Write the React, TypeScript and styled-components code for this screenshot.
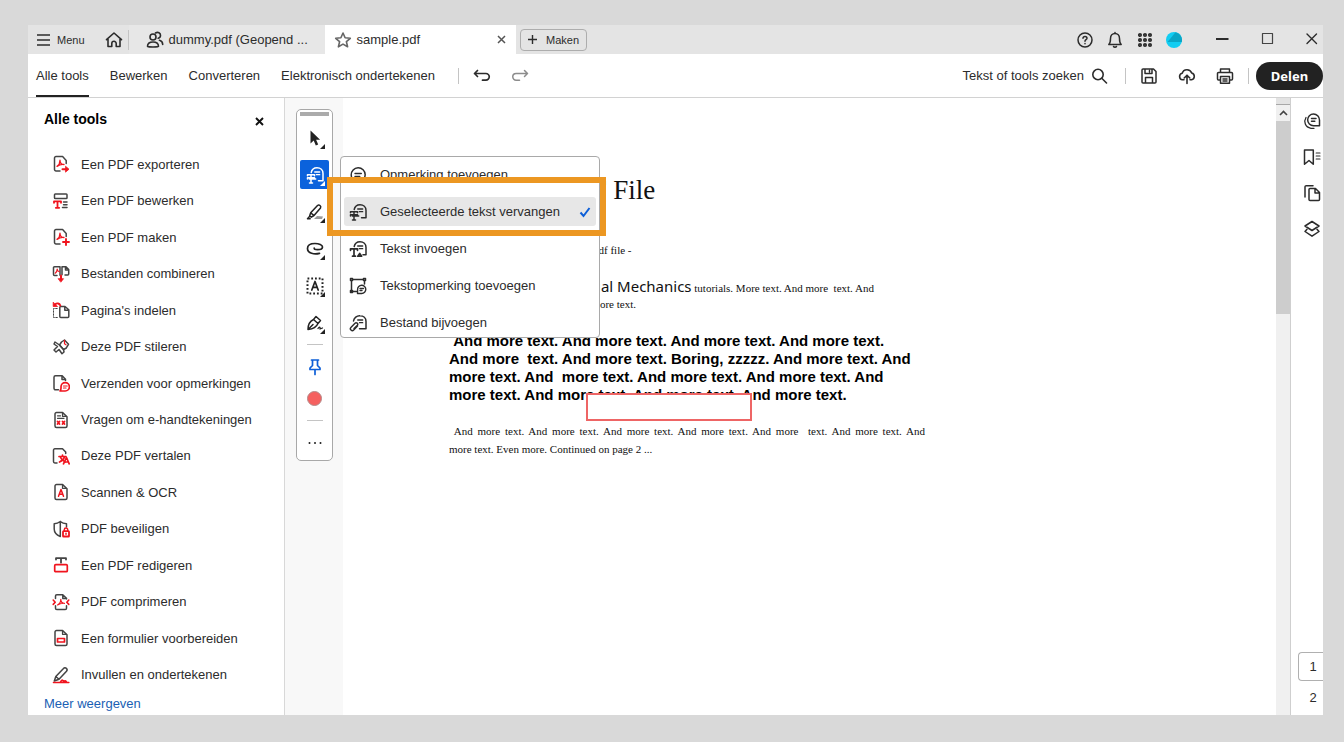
import React from "react";
import styled, { createGlobalStyle } from "styled-components";

const INK = "#2c2c2c";
const RED = "#f0141e";
const BLUE = "#0d5fd8";

const Global = createGlobalStyle`
  * { box-sizing: border-box; }
  body { margin: 0; background: #d9d9d9; font-family: "Liberation Sans", Arial, sans-serif; font-size: 13px; color: ${INK}; }
  button { font: inherit; color: inherit; background: none; border: 0; padding: 0; cursor: pointer; }
  svg { display: block; flex: none; }
`;

const Page = styled.div`
  min-height: 100vh;
  padding: 25px 21px 27px 28px;
  display: flex;
  flex-direction: column;
`;

const Window = styled.div`
  flex: 1;
  background: #fff;
  display: flex;
  flex-direction: column;
`;

/* Title bar */
const TitleBar = styled.header`
  height: 29px;
  background: #e4e4e4;
  display: flex;
  align-items: center;
`;
const MenuButton = styled.button`
  display: flex;
  align-items: center;
  gap: 6px;
  padding: 0 8px;
  font-size: 11px;
`;
const HomeButton = styled.button`
  padding: 0 5px 0 12px;
`;
const Divider = styled.span<{ $h?: number }>`
  width: 1px;
  height: ${(p) => p.$h ?? 16}px;
  background: #c4c4c4;
`;
const Tab = styled.div<{ $active?: boolean }>`
  align-self: stretch;
  width: ${(p) => (p.$active ? 191 : 196)}px;
  padding: 0 ${(p) => (p.$active ? 9 : 17)}px;
  display: flex;
  align-items: center;
  background: ${(p) => (p.$active ? "#fff" : "#e7e7e7")};
`;
const TabLabel = styled.button`
  display: flex;
  align-items: center;
  gap: 5px;
  flex: 1;
  white-space: nowrap;
`;
const NewButton = styled.button`
  margin-left: 4px;
  height: 22px;
  width: 67px;
  display: flex;
  align-items: center;
  justify-content: center;
  gap: 8px;
  font-size: 11px;
  border: 1px solid #adadad;
  border-radius: 4px;
`;
const TitleActions = styled.div`
  margin-left: auto;
  display: flex;
  align-items: center;
  gap: 12px;
`;
const WindowControls = styled.div`
  margin-left: 31px;
  padding-right: 2px;
  display: flex;
  align-items: center;
  gap: 27px;
`;

/* Main toolbar */
const ToolBar = styled.div`
  height: 44px;
  padding-left: 8px;
  border-bottom: 1px solid #d2d2d2;
  display: flex;
  align-items: center;
`;
const Nav = styled.nav`
  align-self: stretch;
  display: flex;
  gap: 21px;
  margin-right: 23px;
`;
const NavLink = styled.a<{ $active?: boolean }>`
  display: flex;
  align-items: center;
  color: ${INK};
  text-decoration: none;
  white-space: nowrap;
  border-top: 2px solid transparent;
  border-bottom: 2px solid ${(p) => (p.$active ? "#222" : "transparent")};
`;
const History = styled.div`
  display: flex;
  gap: 20px;
  padding-left: 14px;
`;
const ToolBarRight = styled.div`
  margin-left: auto;
  display: flex;
  align-items: center;
`;
const SearchButton = styled.button`
  display: flex;
  align-items: center;
  gap: 6px;
  margin-right: 17px;
`;
const FileActions = styled.div`
  display: flex;
  gap: 20px;
  padding: 0 14px;
`;
const ShareButton = styled.button`
  width: 67px;
  height: 28px;
  margin-left: 7px;
  border-radius: 14px;
  background: #222;
  color: #fff;
  font-family: "Noto Sans", "Liberation Sans", sans-serif;
  font-weight: 700;
  font-size: 13px;
`;

/* Body */
const Body = styled.div`
  flex: 1;
  display: flex;
`;
const Sidebar = styled.aside`
  flex: 0 0 257px;
  border-right: 1px solid #d8d8d8;
  display: flex;
  flex-direction: column;
`;
const SidebarHead = styled.div`
  height: 48px;
  padding: 12px 19px 0 16px;
  display: flex;
  justify-content: space-between;
  align-items: flex-start;
`;
const SidebarTitle = styled.h1`
  margin: 0;
  font-size: 14px;
  line-height: 18px;
  color: #000;
`;
const CloseButton = styled.button`
  padding: 6px 0;
`;
const ToolList = styled.ul`
  flex: 1;
  margin: 0;
  padding: 0;
  list-style: none;
  display: flex;
  flex-direction: column;
`;
const ToolItem = styled.li`
  flex: 1;
  display: flex;
`;
const ToolButton = styled.button`
  flex: 1;
  min-height: 24px;
  padding-left: 24px;
  display: flex;
  align-items: center;
  gap: 11px;
  text-align: left;
`;
const MoreLink = styled.a`
  padding-left: 16px;
  line-height: 22px;
  color: #1a5fb4;
  text-decoration: none;
`;

/* Quick tools */
const Canvas = styled.main`
  flex: 1;
  display: flex;
`;
const Gutter = styled.div`
  flex: 0 0 58px;
  padding: 11px 0 0 11px;
  background: #f8f8f8;
`;
const Quick = styled.div`
  width: 37px;
  padding: 2px 3px 3px;
  border: 1px solid #a8a8a8;
  border-radius: 5px;
  background: #fff;
  display: flex;
  flex-direction: column;
  align-items: center;
  gap: 7px;
`;
const Handle = styled.div`
  align-self: stretch;
  height: 4px;
  background: #ababab;
`;
const QuickGroup = styled.div<{ $gap: number }>`
  display: flex;
  flex-direction: column;
  gap: ${(p) => p.$gap}px;
`;
const QuickRule = styled.div`
  width: 16px;
  height: 1px;
  background: #c4c4c4;
`;
const QuickSlot = styled.div`
  position: relative;
`;
const QuickButton = styled.button<{ $on?: boolean }>`
  width: 29px;
  height: 29px;
  display: grid;
  place-items: center;
  border-radius: 2px;
  color: ${(p) => (p.$on ? "#fff" : "#222")};
  background: ${(p) => (p.$on ? "#0b62dc" : "none")};
`;
const Corner = styled.span<{ $on?: boolean }>`
  position: absolute;
  right: 4px;
  bottom: 3px;
  border-left: 5px solid transparent;
  border-bottom: 5px solid ${(p) => (p.$on ? "#fff" : "#222")};
`;
const ColorDot = styled.span`
  width: 15px;
  height: 15px;
  border-radius: 50%;
  border: 1px solid #b58a8a;
  background: #f5605f;
`;
const Menu = styled.div`
  position: absolute;
  z-index: 2;
  left: 40px;
  top: -4px;
  width: 260px;
  padding: 3px 3px 0;
  border: 1px solid #a9a9a9;
  border-radius: 4px;
  background: #fff;
  display: flex;
  flex-direction: column;
  gap: 8px;
`;
const MenuItem = styled.button<{ $on?: boolean }>`
  height: 29px;
  padding: 0 5px;
  display: flex;
  align-items: center;
  gap: 13px;
  border-radius: 3px;
  background: ${(p) => (p.$on ? "#e7e7e7" : "none")};
`;
const MenuText = styled.span`
  flex: 1;
  text-align: left;
`;
const Marker = styled.div`
  position: absolute;
  z-index: 3;
  left: 27px;
  top: 17px;
  width: 279px;
  height: 59px;
  border: 6px solid #ec9722;
  pointer-events: none;
`;

/* Document */
const Doc = styled.article`
  flex: 1;
  padding: 76px 20px 0 106px;
  color: #111;
  font-family: "Liberation Serif", "Times New Roman", serif;
  font-size: 11px;
  line-height: 16px;
`;
const DocTitle = styled.h2`
  margin: 0 0 36px;
  font-weight: 400;
  font-size: 27px;
  line-height: 32px;
`;
const Para = styled.p<{ $indent?: number; $gap?: number; $line?: number }>`
  margin: 0 0 ${(p) => p.$gap ?? 0}px;
  max-width: 476px;
  text-indent: ${(p) => p.$indent ?? 0}px;
  line-height: ${(p) => p.$line ?? 16}px;
  white-space: nowrap;
`;
const Large = styled.span`
  font-family: "Noto Sans", sans-serif;
  font-size: 15px;
  line-height: 1;
`;
const Justified = styled.span`
  display: block;
  white-space: normal;
  text-align-last: justify;
`;
const BoldPara = styled.div`
  position: relative;
  margin-bottom: 18px;
  font-family: "Liberation Sans", Arial, sans-serif;
  font-weight: 700;
  font-size: 15px;
  line-height: 18px;
  color: #000;
  white-space: nowrap;
`;
const Redaction = styled.div`
  position: absolute;
  left: 137px;
  top: 61px;
  width: 166px;
  height: 28px;
  border: 2px solid #ee6565;
  background: #fff;
`;

/* Scroll bar and right rail */
const ScrollBar = styled.div`
  flex: 0 0 15px;
  background: #f0f0f0;
  border-right: 1px solid #cfcfcf;
  display: flex;
  flex-direction: column;
`;
const Splitter = styled.div`
  height: 7px;
  background: #e3e3e3;
  border-bottom: 1px solid #a8a8a8;
`;
const ScrollUp = styled.button`
  height: 16px;
  display: grid;
  place-items: center;
`;
const Thumb = styled.div`
  height: 193px;
  background: #cdcdcd;
`;
const Rail = styled.div`
  flex: 0 0 32px;
  display: flex;
  flex-direction: column;
  justify-content: space-between;
`;
const RailTools = styled.div`
  padding: 14px 0 0 12px;
  display: flex;
  flex-direction: column;
  gap: 18px;
`;
const Pages = styled.div`
  padding: 0 0 9px 7px;
  display: flex;
  flex-direction: column;
  gap: 7px;
`;
const PageButton = styled.button<{ $on?: boolean }>`
  height: ${(p) => (p.$on ? 29 : 18)}px;
  padding-left: 4px;
  border: solid ${(p) => (p.$on ? "#b0b0b0" : "transparent")};
  border-width: 1px 0 1px 1px;
  border-radius: 4px 0 0 4px;
`;

/* Icons */
type IconProps = { children: React.ReactNode; size?: number; w?: number; color?: string };
const Icon = ({ children, size = 18, w = 1.5, color = "currentColor" }: IconProps) => (
  <svg width={size} height={size} viewBox="0 0 18 18" fill="none" stroke={color} strokeWidth={w} strokeLinecap="round" strokeLinejoin="round" aria-hidden="true">
    {children}
  </svg>
);
const Acro = () => (
  <path stroke={RED} strokeWidth="1.300" d="M5 11.400c1.800-1.200 3-3.600 3-6.200 0 2.600 1.200 4.200 4 4.300-2.600-.3-4.800.3-7 1.900z" />
);
const Fold = () => <path d="M10.500 1.700v3.600h3.800" strokeWidth="1.200" />;
const fullDoc = "M10.600 1.600H4.500A1.500 1.500 0 0 0 3 3.100v11.800a1.500 1.500 0 0 0 1.500 1.500h9a1.500 1.500 0 0 0 1.500-1.500V5.800z";
const openDoc = "M14.200 8.500V5.400L10.600 1.600H4A1.500 1.500 0 0 0 2.500 3.100v11.300A1.500 1.500 0 0 0 4 15.900h4";

const tools: { label: string; icon: React.ReactNode }[] = [
  { label: "Een PDF exporteren", icon: <><path d={openDoc} /><Acro /><path d="M10.500 14.200h4" stroke={RED} strokeWidth="2" /><path d="M13.800 11.500l3.200 2.700-3.200 2.700z" fill={RED} stroke={RED} strokeWidth=".8" /></> },
  { label: "Een PDF bewerken", icon: <><rect x="2.500" y="2" width="12.500" height="4.500" rx=".8" /><path d="M11.500 10H15M11.500 12.700H15M10.500 15.500H15" /><path d="M2 10.800V9.300h7v1.500M5.500 9.300v6.300M3.800 15.800h3.400" stroke={RED} strokeWidth="1.800" /></> },
  { label: "Een PDF maken", icon: <><path d={openDoc} /><Acro /><path d="M14 11v6M11 14h6" stroke={RED} strokeWidth="1.900" /></> },
  { label: "Bestanden combineren", icon: <><path d="M5 10.500H2.500A1 1 0 0 1 1.500 9.500V2.800a1 1 0 0 1 1-1H8v8.500M10 9.800V1.800h4l2.700 2.700v4.500a1 1 0 0 1-1 1H13M13.500 2v3h3" /><path d="M3.200 8.200C4.500 7.300 5.200 5.500 5.200 4c0 1.600.8 2.500 2 2.700" stroke={RED} strokeWidth="1.200" /><path d="M9 10.500v4" stroke={RED} strokeWidth="2" /><path d="M6.500 13.700h5L9 16.900z" fill={RED} stroke={RED} strokeWidth=".8" /></> },
  { label: "Pagina's indelen", icon: <><path d="M13 5.500H8.800a1 1 0 0 0-1 1v9a1 1 0 0 0 1 1h7a1 1 0 0 0 1-1V8.800zM12.800 5.700v3.500h3.800" /><path d="M5.200 7.500H1.500v9h4.200" strokeWidth="1" strokeDasharray="1.500 1.500" /><path d="M3 3.500c2-1.800 4.500-1.300 5.300 1" stroke={RED} strokeWidth="1.900" /><path d="M1.200 1.500v4h4z" fill={RED} stroke={RED} strokeWidth=".8" /></> },
  { label: "Deze PDF stileren", icon: <><path d="M9.500 4l3-2 4 4.300-2.500 4-2.500 1.200-4-4.500z" /><path d="M7.500 7L3 4l-1 2 3.500 2.500L2 12l2 2 3-2.500 3 4.200L12 14l-.5-2.500M7.500 7l4 4.500" /><path d="M12.500 2.300v3.500l1.500 1" stroke={RED} strokeWidth="1.200" /></> },
  { label: "Verzenden voor opmerkingen", icon: <><path d="M13.500 6.500V5.300L10.200 1.800H3.500A1.500 1.500 0 0 0 2 3.300v11a1.500 1.500 0 0 0 1.500 1.500h3M10 2v3.500h3.500" /><path d="M8 17h5.200a4.200 4.200 0 1 0-4.200-4.200c0 1.800.3 2.800-1 4.200z" stroke={RED} strokeWidth="1.700" /><path d="M11.500 12h3.700M11.500 14h2.500" stroke={RED} strokeWidth="1.200" /></> },
  { label: "Vragen om e-handtekeningen", icon: <><path d={fullDoc} /><Fold /><path d="M5.500 4.800h3M5.500 7.300h6.500" strokeWidth="1.200" /><path d="M5.500 10.500l2 2.500M7.500 10.500l-2 2.500M10.500 10.500l2 2.500M12.500 10.500l-2 2.500" stroke={RED} strokeWidth="1.800" /></> },
  { label: "Deze PDF vertalen", icon: <><path d="M13.700 6.500V5L10.500 1.800H2.800a1.300 1.300 0 0 0-1.300 1.300v11.500a1.300 1.300 0 0 0 1.300 1.300H5" /><path d="M7 9.500h7M10.500 8v1.500M8.300 10c1 2.500 2.700 4 4.700 5M12.500 10c-.8 2.500-2.500 4-5 5M11.500 16.800l3-6.300 2.700 6.300M12.500 15h3.700" stroke={RED} strokeWidth="1.700" /></> },
  { label: "Scannen & OCR", icon: <><path d={fullDoc} /><Fold /><path d="M6.500 13.300L9 6.500l2.500 6.800M7.300 11.300h3.400" stroke={RED} strokeWidth="1.500" /></> },
  { label: "PDF beveiligen", icon: <><path d="M14.500 7V3.800C12.500 3.700 10 2.900 8.300 1.500 6.500 2.900 4.500 3.700 2.200 3.800V9c0 3.500 2.500 6 6.100 7.500V1.500" /><rect x="11" y="11.200" width="6" height="5.300" rx=".6" stroke={RED} strokeWidth="1.800" /><path d="M12.300 11V9.700a1.700 1.700 0 0 1 3.400 0V11M14 13.200v1" stroke={RED} /></> },
  { label: "Een PDF redigeren", icon: <><path d="M4 3.500V2.200h10v1.300M9 2.200v4.500" strokeWidth="1.800" /><rect x="2.700" y="8.700" width="12.600" height="7" rx="1" stroke={RED} strokeWidth="1.700" /></> },
  { label: "PDF comprimeren", icon: <><path d="M3.500 5.500V3A1.300 1.300 0 0 1 4.800 1.700h6l3.700 3.500v.8M10.800 2v3.500h3.500M3.500 12.800v2.400a1.300 1.300 0 0 0 1.300 1.300h8.400a1.300 1.300 0 0 0 1.300-1.300v-2.400" /><path d="M1.200 7l2 2.200-2 2.200M16.800 7l-2 2.200 2 2.200" stroke={RED} strokeWidth="1.600" /><path d="M5.500 12C7.500 11 8.800 8.700 8.800 6.300c0 2.500 1.200 4 3.700 4-2.500-.2-4.800.2-7 1.700z" stroke={RED} strokeWidth="1.200" /></> },
  { label: "Een formulier voorbereiden", icon: <><path d={fullDoc} /><Fold /><rect x="5.500" y="9.500" width="7" height="3.500" stroke={RED} strokeWidth="1.700" /></> },
  { label: "Invullen en ondertekenen", icon: <><path d="M2.300 15l1.500-4.500L11.500 2.500a1.900 1.900 0 0 1 3 2.700L7 13.200zM3.800 10.500L7 13.200" /><path d="M1.500 16.500h15.300M8.500 16c1.500-2.500 2.500-2.500 3 0 1.200-1.500 2-1.500 3 0" stroke={RED} strokeWidth="1.600" /></> },
];

const CommentReplace = () => (
  <Icon><path d="M5.200 6.500A6 6 0 0 1 11 1.700c3.500 0 6 2.400 6 5.700v7.300h-4.500" /><path d="M8.700 6h5M10.300 8.700h3.400" strokeWidth="1.300" /><path d="M1.500 9.800V8.700h7v1.100M5 8.700v3M3.300 13h6.400M1.500 13v-1.300h7V13M5 13v4M3.500 17h3" strokeWidth="1.500" /></Icon>
);
const CommentAdd = () => (
  <Icon><path d="M3 15.800h6.200A7 7 0 1 0 2.200 9c0 2.500 1.300 4 1.300 4z" /><path d="M6 7.500h6.300M6 10.500h4.800" strokeWidth="1.400" /></Icon>
);
const CommentInsert = () => (
  <Icon><path d="M5.200 6.500A6 6 0 0 1 11 1.700c3.500 0 6 2.400 6 5.700v7.300h-3" /><path d="M8.700 6h5M10.300 8.700h3.400" strokeWidth="1.300" /><path d="M1.500 10.300V8.800h7v1.500M5 8.800v7M3.500 16.200h3M8.800 16.200l1.900-2.700 1.900 2.700z" strokeWidth="1.700" /></Icon>
);
const CommentText = () => (
  <Icon><path d="M2.500 4v10.500h5M4 2.500h10M15.500 4v3M1.500 1.500h2v2h-2zM14.500 1.500h2v2h-2zM1.500 13.500h2v2h-2z" /><path d="M8.500 16.500h4.200A4.100 4.100 0 1 0 8.600 12.500zM11 11.500h3.500M11 13.500h2" strokeWidth="1.400" /></Icon>
);
const CommentAttach = () => (
  <Icon><path d="M4.500 7A6.200 6.200 0 0 1 11 1.700c3.500 0 6 2.400 6 5.700v7.300H10.500" /><path d="M8.700 6h5M10.500 8.700h3.200" strokeWidth="1.300" /><path d="M8.500 12l-3.800 4a1.900 1.900 0 0 1-2.800-2.600L6 9.200a1.600 1.600 0 0 1 2.400 2.100L5 14.500" strokeWidth="1.400" /></Icon>
);

const menuItems = [
  { label: "Opmerking toevoegen", icon: <CommentAdd /> },
  { label: "Geselecteerde tekst vervangen", icon: <CommentReplace />, on: true },
  { label: "Tekst invoegen", icon: <CommentInsert /> },
  { label: "Tekstopmerking toevoegen", icon: <CommentText /> },
  { label: "Bestand bijvoegen", icon: <CommentAttach /> },
];

const quickTools: { label: string; icon: React.ReactNode; menu?: boolean }[] = [
  { label: "Selecteren", icon: <Icon><path d="M4.500 1.500v13l3.200-3 2.100 5 2.400-1-2.100-4.800h4z" fill="currentColor" stroke="none" /></Icon> },
  { label: "Opmerking", icon: <CommentReplace />, menu: true },
  { label: "Markeren", icon: <Icon><path d="M8 16h8l1-2.500-6-.5z" fill="#999" stroke="none" /><path d="M4.700 9.800L11.500 2.500a2 2 0 0 1 3 2.500l-6.500 7.500zM4.700 9.800l-1 3 1.600 1.400L8 12.500M3.500 13.500l-2 2.200h2.700" /></Icon> },
  { label: "Tekenen", icon: <Icon w={1.7}><path d="M13.500 13.300c-5 1.200-12 .2-12-4.800C1.500 5 5 3.500 9 3.500s7.500 1.500 7.500 3.400-3 2.700-5 2.700-3.300-.4-3.300-1.400" /></Icon> },
  { label: "Tekstvak", icon: <Icon><path d="M1.500 1.500h15v15h-15z" strokeDasharray="1.800 1.950" strokeLinecap="butt" strokeWidth="2" /><path d="M5.800 13L9 4.500l3.200 8.500M6.800 10.300h4.400" strokeWidth="1.700" /></Icon> },
  { label: "Ondertekenen", icon: <Icon><path d="M2 15.500c0-4.500 1.200-8 5.500-10L10 2.500l4.500 4-2.500 3c-1.500 3.500-5 5.500-10 6zM2 15.500l5-5M7.500 5.500l4.500 4" /><path d="M12 14.500c1.500-2.200 2.500-1.500 2 .5l2.500-1" strokeWidth="1.300" /></Icon> },
];

export default function App() {
  return (
    <>
      <Global />
      <Page>
        <Window>
          <TitleBar>
            <MenuButton>
              <svg width="15" height="12" viewBox="0 0 15 12" stroke={INK} strokeWidth="1.400" aria-hidden="true"><path d="M1 1h13M1 6h13M1 11h13" /></svg>
              Menu
            </MenuButton>
            <HomeButton aria-label="Start"><Icon w={1.6}><path d="M1.500 8.700L9 2l7.500 6.700M3 8v7.500h3.800v-3a2.200 2.200 0 0 1 4.400 0v3H15V8" /></Icon></HomeButton>
            <Divider $h={20} />
            <Tab>
              <TabLabel>
                <Icon w={1.6}><circle cx="7" cy="6" r="3" /><path d="M1.500 15.500c0-2.800 2-4.500 5.500-4.500s5.500 1.700 5.500 4.500c0 .6-11 .6-11 0zM9.500 2c2.500-1.500 5 0 5 2.300 0 1.700-1 2.700-2.300 3M13.500 9.300c2 .5 3.200 2 3.200 4.200" /></Icon>
                dummy.pdf (Geopend ...
              </TabLabel>
            </Tab>
            <Tab $active>
              <TabLabel>
                <Icon color="#666" w={1.6}><path d="M9 2l2.100 4.800 5.200.5-3.900 3.400 1.200 5.100L9 13.100l-4.600 2.700 1.200-5.100-3.900-3.400 5.200-.5z" /></Icon>
                sample.pdf
              </TabLabel>
              <button aria-label="Tabblad sluiten"><svg width="11" height="11" viewBox="0 0 11 11" stroke="#555" strokeWidth="1.500" aria-hidden="true"><path d="M2 2l7 7M9 2L2 9" /></svg></button>
            </Tab>
            <NewButton>
              <svg width="11" height="11" viewBox="0 0 11 11" stroke={INK} strokeWidth="1.400" aria-hidden="true"><path d="M5.500 1v9M1 5.500h9" /></svg>
              Maken
            </NewButton>
            <TitleActions>
              <button aria-label="Help"><Icon><circle cx="9" cy="9" r="7" /><path d="M7 7.300c.1-2.600 4-2.400 4-.1 0 1.500-2 1.500-2 3M9 12.500v.3" /></Icon></button>
              <button aria-label="Meldingen"><Icon><path d="M2.800 13.500h12.400c-1.700-1.500-1.700-3-1.700-6C13.500 4.500 11.500 2.500 9 2.500S4.500 4.500 4.500 7.500c0 3 0 4.500-1.700 6zM9 1.500v1M7.500 15.500c.7 1 2.300 1 3 0" /></Icon></button>
              <button aria-label="Apps">
                <Icon w={1.7}>{[4, 9, 14].map((y) => [4, 9, 14].map((x) => <circle key={`${x}-${y}`} cx={x} cy={y} r="1.200" />))}</Icon>
              </button>
              <button aria-label="Account">
                <svg width="16" height="16" viewBox="0 0 16 16" aria-hidden="true"><circle cx="8" cy="8" r="8" fill="#12cdf2" /><path d="M1.500 10L9.500 0.300A8 8 0 0 1 15.800 10z" fill="#0aa6c6" /></svg>
              </button>
            </TitleActions>
            <WindowControls>
              <button aria-label="Minimaliseren"><Icon><path d="M3 8h12.500" strokeLinecap="butt" strokeWidth="2" /></Icon></button>
              <button aria-label="Maximaliseren"><Icon color="#444"><path d="M4.500 2.500h10v10h-10z" strokeWidth="1.200" /></Icon></button>
              <button aria-label="Sluiten"><Icon w={1.4}><path d="M4 3l9.500 9.500M13.500 3L4 12.500" /></Icon></button>
            </WindowControls>
          </TitleBar>

          <ToolBar>
            <Nav>
              <NavLink href="#tools" $active>Alle tools</NavLink>
              <NavLink href="#edit">Bewerken</NavLink>
              <NavLink href="#convert">Converteren</NavLink>
              <NavLink href="#sign">Elektronisch ondertekenen</NavLink>
            </Nav>
            <Divider />
            <History>
              <button aria-label="Ongedaan maken"><Icon w={1.7}><path d="M4.500 3.500L1.500 6.500l3 3M1.500 6.500h11.400a3.300 3.300 0 0 1 0 6.700H9.500" /></Icon></button>
              <button aria-label="Opnieuw"><Icon w={1.5} color="#8c8c8c"><path d="M13.500 3.500l3 3-3 3M16.500 6.500H5.100a3.300 3.300 0 0 0 0 6.700h3.400" /></Icon></button>
            </History>
            <ToolBarRight>
              <SearchButton>
                Tekst of tools zoeken
                <Icon w={1.6}><circle cx="8" cy="7.500" r="5.200" /><path d="M12 11.500l4.500 4.500" /></Icon>
              </SearchButton>
              <Divider />
              <FileActions>
                <button aria-label="Opslaan"><Icon><path d="M3 2h10.500L16 4.500V15a1 1 0 0 1-1 1H3a1 1 0 0 1-1-1V3a1 1 0 0 1 1-1zM5 2v4.500h7V2M9.500 3.500v1.500M5.500 16v-5.500h7V16" /></Icon></button>
                <button aria-label="Uploaden"><Icon w={1.6}><path d="M6 12.800H4.500a3.300 3.300 0 0 1-.3-6.500 5 5 0 0 1 9.500-.3 3.500 3.500 0 0 1-.2 6.800H12M9 16.500V8.500M6.200 11L9 8.200l2.800 2.800" /></Icon></button>
                <button aria-label="Afdrukken"><Icon><path d="M4.500 5V2h9v3M4.500 13H2.500a1 1 0 0 1-1-1V6.500a1 1 0 0 1 1-1h13a1 1 0 0 1 1 1V12a1 1 0 0 1-1 1h-2M4.500 9.500h9v6.800h-9zM7 12h4M7 14h4" /></Icon></button>
              </FileActions>
              <Divider />
              <ShareButton>Delen</ShareButton>
            </ToolBarRight>
          </ToolBar>

          <Body>
            <Sidebar>
              <SidebarHead>
                <SidebarTitle>Alle tools</SidebarTitle>
                <CloseButton aria-label="Paneel sluiten"><svg width="11" height="11" viewBox="0 0 11 11" stroke="#111" strokeWidth="1.900" aria-hidden="true"><path d="M2 2l7 7M9 2L2 9" /></svg></CloseButton>
              </SidebarHead>
              <ToolList>
                {tools.map((t) => (
                  <ToolItem key={t.label}>
                    <ToolButton><Icon color="#444">{t.icon}</Icon>{t.label}</ToolButton>
                  </ToolItem>
                ))}
              </ToolList>
              <MoreLink href="#more">Meer weergeven</MoreLink>
            </Sidebar>

            <Canvas>
              <Gutter>
                <Quick>
                  <Handle />
                  <QuickGroup $gap={8}>
                    {quickTools.map((q) => (
                      <QuickSlot key={q.label}>
                        <QuickButton $on={q.menu} aria-label={q.label}>{q.icon}</QuickButton>
                        <Corner $on={q.menu} />
                        {q.menu && (
                          <>
                            <Menu>
                              {menuItems.map((m) => (
                                <MenuItem key={m.label} $on={m.on}>
                                  {m.icon}
                                  <MenuText>{m.label}</MenuText>
                                  {m.on && <svg width="12" height="12" viewBox="0 0 12 12" fill="none" stroke={BLUE} strokeWidth="2" aria-hidden="true"><path d="M1.500 6.500l3 3.500 6-8" /></svg>}
                                </MenuItem>
                              ))}
                            </Menu>
                            <Marker />
                          </>
                        )}
                      </QuickSlot>
                    ))}
                  </QuickGroup>
                  <QuickRule />
                  <QuickGroup $gap={3}>
                    <QuickButton aria-label="Vastmaken"><Icon color={BLUE} w={1.7}><path d="M5.500 2h7M6.500 2v5.500L4 10v1.500h10V10l-2.500-2.500V2M9 11.500v5" /></Icon></QuickButton>
                    <QuickButton aria-label="Kleur"><ColorDot /></QuickButton>
                  </QuickGroup>
                  <QuickRule />
                  <QuickButton aria-label="Meer"><Icon><path d="M3.500 9h.01M9 9h.01M14.500 9h.01" strokeWidth="2" /></Icon></QuickButton>
                </Quick>
              </Gutter>
              <Doc>
                <DocTitle>A Simple PDF File</DocTitle>
                <Para $indent={9} $gap={21}>This is a small demonstration .pdf file -</Para>
                <Para $indent={39} $gap={20}>
                  just for use in the <Large>Virtual Mechanics</Large> tutorials. More text. And more&nbsp; text. And<br />
                  &nbsp;&nbsp;more text. And more text. And more text.
                </Para>
                <BoldPara>
                  &nbsp;And more text. And more text. And more text. And more text.<br />
                  And more&nbsp; text. And more text. Boring, zzzzz. And more text. And<br />
                  more text. And&nbsp; more text. And more text. And more text. And<br />
                  more text. And more text. And more text. And more text.
                  <Redaction />
                </BoldPara>
                <Para $line={18}>
                  <Justified>&nbsp;And more text. And more text. And more text. And more text. And more&nbsp; text. And more text. And</Justified>
                  more text. Even more. Continued on page 2 ...
                </Para>
              </Doc>
            </Canvas>

            <ScrollBar>
              <Splitter />
              <ScrollUp aria-label="Omhoog"><svg width="9" height="6" viewBox="0 0 9 6" fill="none" stroke="#444" strokeWidth="1.600" aria-hidden="true"><path d="M1 5l3.500-3.500L8 5" /></svg></ScrollUp>
              <Thumb />
            </ScrollBar>
            <Rail>
              <RailTools>
                <button aria-label="Opmerkingen"><Icon><path d="M10.500 2a6 6 0 0 1 6 6v5.700h-6A5.800 5.800 0 1 1 10.500 2zM8.500 6.500h4.500M8.500 9.200h3.300" /><path d="M3 5.500C.5 9.500 2 15.500 8 16.300h3" strokeWidth="1.300" /></Icon></button>
                <button aria-label="Bladwijzers"><Icon><path d="M1.500 2h8.800v14.300L6 12.500l-4.500 3.800z" /><path d="M13.200 5H17M13.200 8H17M13.200 11H17" strokeWidth="1.200" /></Icon></button>
                <button aria-label="Pagina's"><Icon><path d="M12.500 4.500H7a1 1 0 0 0-1 1v10a1 1 0 0 0 1 1h8.500a1 1 0 0 0 1-1V8.500zM12 4.700V9h4.300" /><path d="M2 13V3a1.300 1.300 0 0 1 1.300-1.300H10" /></Icon></button>
                <button aria-label="Lagen"><Icon><path d="M9 1.500L16 6 9 10.500 2 6z" /><path d="M4 9.200L2 11.500 9 16.200l7-4.700-2-2.300" /></Icon></button>
              </RailTools>
              <Pages>
                <PageButton $on>1</PageButton>
                <PageButton>2</PageButton>
              </Pages>
            </Rail>
          </Body>
        </Window>
      </Page>
    </>
  );
}
